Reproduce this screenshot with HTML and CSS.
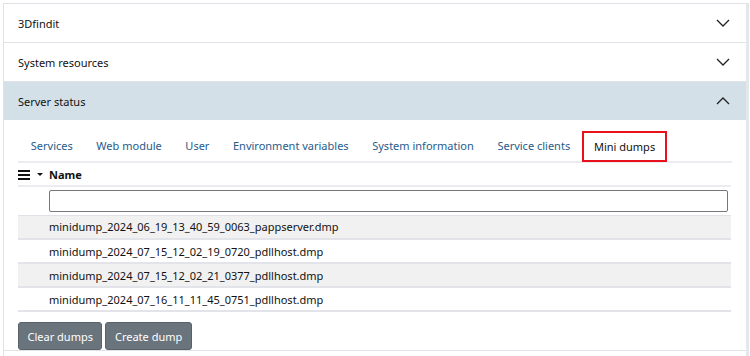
FILE: index.html
```html
<!DOCTYPE html>
<html lang="en">
<head>
    <meta charset="UTF-8">
    <meta name="viewport" content="width=device-width, initial-scale=1.0">
    <title>Settings</title>
    <link rel="stylesheet" href="styles.css">
</head>
<body>
    <div class="accordion">
        <div class="acc-item">
            <div class="acc-head">
                <span>3Dfindit</span>
                <svg class="chev" width="14" height="8" viewBox="0 0 14 8"><path d="M1 1l6 6 6-6" fill="none" stroke="#222" stroke-width="1.3"/></svg>
            </div>
        </div>
        <div class="acc-item">
            <div class="acc-head">
                <span>System resources</span>
                <svg class="chev" width="14" height="8" viewBox="0 0 14 8"><path d="M1 1l6 6 6-6" fill="none" stroke="#222" stroke-width="1.3"/></svg>
            </div>
        </div>
        <div class="acc-item open">
            <div class="acc-head">
                <span>Server status</span>
                <svg class="chev" width="14" height="8" viewBox="0 0 14 8"><path d="M1 7l6-6 6 6" fill="none" stroke="#222" stroke-width="1.3"/></svg>
            </div>
            <div class="acc-body">
                <ul class="tabs">
                    <li class="tab">Services</li>
                    <li class="tab">Web module</li>
                    <li class="tab">User</li>
                    <li class="tab">Environment variables</li>
                    <li class="tab">System information</li>
                    <li class="tab">Service clients</li>
                    <li class="tab active">Mini dumps</li>
                </ul>
                <table class="dumps">
                    <thead>
                        <tr class="head-row">
                            <th class="tools">
                                <span class="burger"><i></i><i></i><i></i></span>
                                <span class="caret"></span>
                            </th>
                            <th class="name">Name</th>
                        </tr>
                        <tr class="filter-row">
                            <th></th>
                            <th class="name"><input type="text" class="filter"></th>
                        </tr>
                    </thead>
                    <tbody>
                        <tr class="odd"><td></td><td class="name">minidump_2024_06_19_13_40_59_0063_pappserver.dmp</td></tr>
                        <tr><td></td><td class="name">minidump_2024_07_15_12_02_19_0720_pdllhost.dmp</td></tr>
                        <tr class="odd"><td></td><td class="name">minidump_2024_07_15_12_02_21_0377_pdllhost.dmp</td></tr>
                        <tr><td></td><td class="name">minidump_2024_07_16_11_11_45_0751_pdllhost.dmp</td></tr>
                    </tbody>
                </table>
                <div class="actions">
                    <button class="btn">Clear dumps</button>
                    <button class="btn">Create dump</button>
                </div>
            </div>
        </div>
    </div>
</body>
</html>
```

FILE: styles.css
```css
*{
    margin: 0;
    padding: 0;
    box-sizing: border-box;
}
li{
    list-style: none;
}
body{
    background-color: #fff;
    font-family: "Noto Sans", "Open Sans", sans-serif;
    font-size: 11px;
    color: #111;
    padding: 3px 1px 0 3px;
}
.accordion{
    border: 1px solid #dfe2e6;
    border-right: 3px solid #e4e7ec;
    border-bottom: none;
    height: 353px;
    overflow: hidden;
}
.acc-item{
    border-bottom: 1px solid #dfe2e6;
}
.acc-head{
    height: 38px;
    padding: 0 15px 0 14px;
    display: flex;
    align-items: center;
    justify-content: space-between;
}
.acc-head .chev{
    margin-right: 1px;
}
.open .acc-head{
    background-color: #d3e0e8;
}
.acc-body{
    padding: 11px 14px 0 14px;
}
.tabs{
    display: flex;
    border-bottom: 2px solid #eaecf0;
    height: 32px;
    white-space: nowrap;
}
.tab{
    flex-shrink: 0;
    padding: 0 11.8px;
    line-height: 30px;
    color: #285b8a;
}
.tab:first-child{
    padding-left: 12.8px;
}
.tab.active{
    color: #111;
    border: 2px solid #e8101a;
    height: 31px;
    line-height: 27px;
    padding: 0 10px;
}
.dumps{
    width: 713px;
    border-collapse: collapse;
}
.dumps th, .dumps td{
    text-align: left;
}
.head-row th{
    height: 23px;
    border-bottom: 2px solid #eaecf0;
    font-weight: bold;
}
.tools{
    width: 31px;
    white-space: nowrap;
}
.burger{
    display: inline-flex;
    flex-direction: column;
    justify-content: space-between;
    width: 12px;
    height: 10px;
    vertical-align: middle;
    margin-top: -2px;
}
.burger i{
    display: block;
    height: 2px;
    background-color: #111;
}
.caret{
    display: inline-block;
    border-left: 3px solid transparent;
    border-right: 3px solid transparent;
    border-top: 3px solid #111;
    vertical-align: middle;
    margin-left: 4px;
    margin-top: -2px;
}
.filter-row th{
    height: 29px;
    border-bottom: 1px solid #dfe2e6;
}
.filter{
    display: block;
    width: 679px;
    height: 22px;
    border: 1px solid #777;
    border-radius: 2px;
}
.dumps td{
    height: 24px;
    border-bottom: 2px solid #e2e4ea;
    white-space: nowrap;
}
.dumps tr.odd td{
    background-color: #f1f1f1;
}
.actions{
    display: flex;
    gap: 3px;
    padding-top: 10px;
}
.btn{
    font-family: inherit;
    font-size: 11px;
    color: #fff;
    background-color: #6a747d;
    border: 1px solid #5a6169;
    border-radius: 3px;
    height: 28px;
    padding: 0 8.5px;
}
```
